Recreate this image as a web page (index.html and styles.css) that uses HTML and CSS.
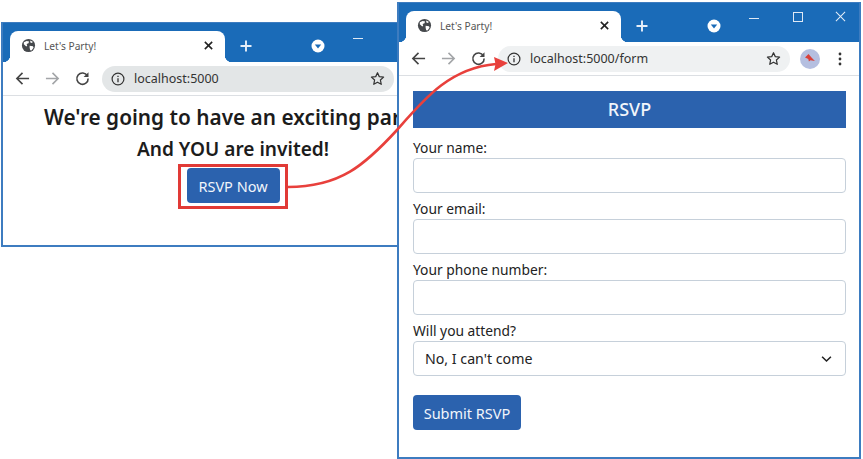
FILE: index.html
```html
<!DOCTYPE html>
<html lang="en">
<head>
  <meta charset="UTF-8">
  <title>Let's Party!</title>
  <link rel="stylesheet" href="styles.css">
</head>
<body>
  <!-- Icons used by both windows -->
  <svg class="sprite">
    <symbol id="i-globe" viewBox="0 0 16 16">
      <circle cx="8" cy="8" r="7" fill="#45484c"/>
      <path d="M3 4.5 6 3.2l2.6.4-.6 2-2 .8.6 1.8-1 .8L3 6.6zM9.2 8.2l3.6.6.6 1.6-2.2 3-1.4-.4-.6-2.6zM10 2.6l2.8 1.6-1.6 1-1.4-.8z" fill="#fff"/>
    </symbol>
    <symbol id="i-close" viewBox="0 0 12 12">
      <path d="M2 2l8 8M10 2l-8 8" stroke="#222" stroke-width="1.7" fill="none"/>
    </symbol>
    <symbol id="i-plus" viewBox="0 0 12 12">
      <path d="M6 .5v11M.5 6h11" stroke="#e6eef8" stroke-width="1.9" fill="none"/>
    </symbol>
    <symbol id="i-drop" viewBox="0 0 14 14">
      <circle cx="7" cy="7" r="6.5" fill="#fff"/>
      <path d="M3.8 5.6h6.4L7 9.4z" fill="#1a6bb8"/>
    </symbol>
    <symbol id="i-arrow" viewBox="0 0 16 16">
      <path d="M15 8H2M8 2 2 8l6 6" stroke="currentColor" stroke-width="1.7" fill="none"/>
    </symbol>
    <symbol id="i-reload" viewBox="0 0 16 16">
      <path d="M13.2 5.2A6 6 0 1 0 14 8" stroke="#444" stroke-width="1.7" fill="none"/>
      <path d="M14.4 1.2v5.2H9.2z" fill="#444"/>
    </symbol>
    <symbol id="i-info" viewBox="0 0 14 14">
      <circle cx="7" cy="7" r="5.9" stroke="#333" stroke-width="1.2" fill="none"/>
      <path d="M7 6.2v4M7 3.8v1.3" stroke="#333" stroke-width="1.3" fill="none"/>
    </symbol>
    <symbol id="i-star" viewBox="0 0 16 16">
      <path d="M8 1.8l1.9 4.2 4.6.5-3.4 3.1.9 4.6L8 11.9l-4 2.3.9-4.6-3.4-3.1 4.6-.5z" stroke="#333" stroke-width="1.3" fill="none" stroke-linejoin="round"/>
    </symbol>
    <symbol id="i-chevron" viewBox="0 0 12 8">
      <path d="M1.2 1.5 6 6.2l4.8-4.7" stroke="#222" stroke-width="1.7" fill="none"/>
    </symbol>
  </svg>

  <!-- Window at the back -->
  <div class="window window-back">
    <div class="tabstrip">
      <div class="tab">
        <svg class="ico-globe"><use href="#i-globe"/></svg>
        <span class="tab-title">Let's Party!</span>
        <svg class="ico-close"><use href="#i-close"/></svg>
      </div>
      <svg class="ico-plus"><use href="#i-plus"/></svg>
      <svg class="ico-drop"><use href="#i-drop"/></svg>
      <div class="win-controls">
        <span class="win-min"></span>
      </div>
    </div>
    <div class="toolbar">
      <svg class="ico-nav"><use href="#i-arrow"/></svg>
      <svg class="ico-nav ico-forward"><use href="#i-arrow"/></svg>
      <svg class="ico-nav"><use href="#i-reload"/></svg>
      <div class="address address-grey">
        <svg class="ico-info"><use href="#i-info"/></svg>
        <span class="url">localhost:5000</span>
        <svg class="ico-star"><use href="#i-star"/></svg>
      </div>
    </div>
    <div class="party">
      <div class="party-title">We're going to have an exciting party!</div>
      <div class="party-sub">And YOU are invited!</div>
      <button class="btn btn-now">RSVP Now</button>
    </div>
  </div>

  <!-- Window at the front -->
  <div class="window window-front">
    <div class="tabstrip">
      <div class="tab">
        <svg class="ico-globe"><use href="#i-globe"/></svg>
        <span class="tab-title">Let's Party!</span>
        <svg class="ico-close"><use href="#i-close"/></svg>
      </div>
      <svg class="ico-plus"><use href="#i-plus"/></svg>
      <svg class="ico-drop"><use href="#i-drop"/></svg>
      <div class="win-controls">
        <span class="win-min"></span>
        <span class="win-max"></span>
        <svg class="win-x" viewBox="0 0 12 12"><path d="M1 1l10 10M11 1 1 11" stroke="#e6eef8" stroke-width="1.1" fill="none"/></svg>
      </div>
    </div>
    <div class="toolbar">
      <svg class="ico-nav"><use href="#i-arrow"/></svg>
      <svg class="ico-nav ico-forward"><use href="#i-arrow"/></svg>
      <svg class="ico-nav"><use href="#i-reload"/></svg>
      <div class="address">
        <svg class="ico-info"><use href="#i-info"/></svg>
        <span class="url">localhost:5000/form</span>
        <svg class="ico-star"><use href="#i-star"/></svg>
      </div>
      <svg class="avatar" viewBox="0 0 20 20">
        <circle cx="10" cy="10" r="10" fill="#b5bfe0"/>
        <path d="M5 8.5 8.5 5l3 3.6 3.4 3.4-4.4-.8-1.6 1.4-.6-2.6z" fill="#d9403a"/>
      </svg>
      <svg class="kebab" viewBox="0 0 4 14"><circle cx="2" cy="2" r="1.4"/><circle cx="2" cy="7" r="1.4"/><circle cx="2" cy="12" r="1.4"/></svg>
    </div>
    <div class="page">
      <div class="rsvp-bar">RSVP</div>
      <form class="rsvp-form">
        <label class="field">Your name:<input class="control" type="text"></label>
        <label class="field">Your email:<input class="control" type="text"></label>
        <label class="field">Your phone number:<input class="control" type="text"></label>
        <label class="field">Will you attend?
          <span class="select-wrap">
            <select class="control select">
              <option>No, I can't come</option>
              <option>Yes, I'll be there</option>
            </select>
            <svg class="ico-chevron"><use href="#i-chevron"/></svg>
          </span>
        </label>
        <button class="btn btn-submit" type="button">Submit RSVP</button>
      </form>
    </div>
  </div>

  <!-- Callout over both windows -->
  <div class="callout-box"></div>
  <svg class="callout" viewBox="0 0 863 459">
    <path d="M288 187C340 187 365 165 397 130 425 98 450 68 496 64" stroke="#e8403c" stroke-width="2.6" fill="none"/>
    <path d="M508 63 494 57l1.5 7-1.5 7z" fill="#e8403c"/>
  </svg>
</body>
</html>
```

FILE: styles.css
```css
html, body {
  margin: 0;
  height: 100%;
}
body {
  position: relative;
  width: 863px;
  height: 459px;
  overflow: hidden;
  background: #fff;
  font-family: 'Noto Sans', 'Open Sans', sans-serif;
  color: #212529;
}
.sprite {
  display: none;
}

/* windows */
.window {
  position: absolute;
  box-sizing: border-box;
  width: 464px;
  border: 2px solid #3d7cc0;
  border-top: 1px solid #3d7cc0;
  background: #fff;
  display: flex;
  flex-direction: column;
  overflow: hidden;
}
.window-back {
  left: 1px;
  top: 22px;
  height: 225px;
}
.window-front {
  left: 397px;
  top: 2px;
  height: 457px;
}

/* tab strip */
.tabstrip {
  flex: none;
  height: 39px;
  box-sizing: border-box;
  padding: 8px 0 0 7px;
  background: #1a6bb8;
  display: flex;
  align-items: flex-start;
  position: relative;
}
.tab {
  position: relative;
  box-sizing: border-box;
  width: 215px;
  height: 31px;
  padding: 0 10px 2px 11px;
  background: #fff;
  border-radius: 8px 8px 0 0;
  display: flex;
  align-items: center;
}
.tab::before, .tab::after {
  content: "";
  position: absolute;
  bottom: 0;
  width: 7px;
  height: 7px;
}
.tab::before {
  left: -7px;
  background: radial-gradient(circle at 0 0, #1a6bb8 7px, #fff 7.5px);
}
.tab::after {
  right: -7px;
  background: radial-gradient(circle at 100% 0, #1a6bb8 7px, #fff 7.5px);
}
.ico-globe {
  width: 15px;
  height: 15px;
  margin-right: 8px;
}
.tab-title {
  flex: 1;
  font-size: 10.2px;
  color: #555;
}
.ico-close {
  width: 11px;
  height: 11px;
  margin-right: 1px;
}
.ico-plus {
  width: 12px;
  height: 12px;
  margin: 9px 0 0 15px;
}
.ico-drop {
  width: 14px;
  height: 14px;
  margin: 8px 0 0 59px;
}
.win-controls {
  position: absolute;
  top: 0;
  right: 0;
  width: 107px;
  height: 28px;
  color: #e6eef8;
}
.win-min {
  position: absolute;
  left: -3px;
  top: 15px;
  width: 10px;
  height: 1px;
  background: #dfe9f5;
}
.win-max {
  position: absolute;
  left: 41px;
  top: 9px;
  width: 8px;
  height: 8px;
  border: 1px solid #dfe9f5;
}
.win-x {
  position: absolute;
  left: 83px;
  top: 8px;
  width: 11px;
  height: 11px;
}

/* toolbar */
.toolbar {
  flex: none;
  box-sizing: border-box;
  height: 34px;
  padding: 0 0 0 12px;
  background: #fff;
  border-bottom: 1px solid #dcdfe3;
  display: flex;
  align-items: center;
}
.ico-nav {
  width: 15px;
  height: 15px;
  margin-right: 15px;
  color: #444;
}
.ico-forward {
  color: #a3a5a8;
  transform: scaleX(-1);
}
.address {
  box-sizing: border-box;
  width: 292px;
  height: 26px;
  margin-left: -3px;
  padding: 0 9px;
  background: #eff1f2;
  border-radius: 13px;
  display: flex;
  align-items: center;
  flex: none;
}
.address-grey {
  background: #e3e6e7;
}
.ico-info {
  width: 14px;
  height: 14px;
  margin-right: 9px;
}
.url {
  flex: 1;
  font-size: 12.5px;
  color: #333;
}
.ico-star {
  width: 15px;
  height: 15px;
}
.avatar {
  flex: none;
  width: 20px;
  height: 20px;
  margin-left: 10px;
}
.kebab {
  flex: none;
  width: 4px;
  height: 14px;
  margin-left: 18px;
  fill: #333;
}

/* back window content */
.party {
  padding-top: 7px;
  text-align: center;
  white-space: nowrap;
}
.party-title {
  font-size: 20.8px;
  font-weight: 600;
  line-height: 28px;
  margin-left: 41px;
  text-align: left;
  color: #1c1c1c;
}
.party-sub {
  font-size: 19.1px;
  font-weight: 600;
  line-height: 26px;
  margin-top: 5px;
  color: #1c1c1c;
}
.btn {
  box-sizing: border-box;
  border: none;
  border-radius: 4px;
  background: #2b62ae;
  color: #f1f5fb;
  font-family: inherit;
  font-size: 14.5px;
  padding: 0;
  display: block;
}
.btn-now {
  width: 93px;
  height: 35px;
  margin: 6px auto 0;
}

/* front window content */
.page {
  padding: 15px 13px 0 14px;
}
.rsvp-bar {
  height: 37px;
  line-height: 37px;
  background: #2b62ae;
  color: #f1f5fb;
  font-size: 18px;
  font-weight: 500;
  text-align: center;
}
.rsvp-form {
  display: flex;
  flex-direction: column;
  padding-top: 10px;
}
.field {
  display: block;
  font-size: 13.8px;
  line-height: 19px;
  margin-bottom: 6px;
  color: #222;
}
.control {
  display: block;
  box-sizing: border-box;
  width: 100%;
  height: 35px;
  margin-top: 1px;
  border: 1px solid #c6d0da;
  border-radius: 4px;
  background: #fff;
  font-family: inherit;
}
.select-wrap {
  display: block;
  position: relative;
}
.select {
  appearance: none;
  padding: 0 11px;
  font-size: 14.2px;
  color: #222;
}
.ico-chevron {
  position: absolute;
  right: 14px;
  top: 14px;
  width: 11px;
  height: 8px;
}
.btn-submit {
  width: 108px;
  height: 35px;
  margin-top: 13px;
}

/* red callout */
.callout-box {
  position: absolute;
  left: 178px;
  top: 164px;
  width: 104px;
  height: 39px;
  border: 3px solid #e13a36;
}
.callout {
  position: absolute;
  left: 0;
  top: 0;
  width: 863px;
  height: 459px;
  pointer-events: none;
}
```
